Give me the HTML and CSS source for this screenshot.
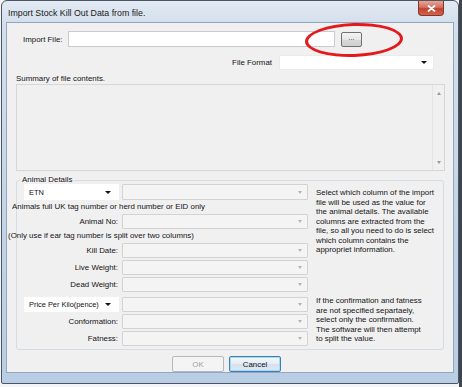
FILE: index.html
```html
<!DOCTYPE html>
<html>
<head>
<meta charset="utf-8">
<link rel="stylesheet" href="styles.css">
</head>
<body>
<div class="window">
  <div class="titlebar">
    <span class="title">Import Stock Kill Out Data from file.</span>
    <div class="close">
      <svg width="9" height="7" viewBox="0 0 9 7"><path d="M1.5 1 L7.5 6 M7.5 1 L1.5 6" stroke="#fff" stroke-width="1.8" stroke-linecap="round"/></svg>
    </div>
  </div>
  <div class="client">
    <div class="row-file">
      <span class="lbl-file">Import File:</span>
      <div class="textbox file-input"></div>
      <button class="btn-browse">...</button>
    </div>
    <div class="row-format">
      <span class="lbl-format">File Format</span>
      <div class="combo combo-white format"><span class="tri"></span></div>
    </div>
    <div class="summary-label">Summary of file contents.</div>
    <div class="summary">
      <div class="summary-body"></div>
      <div class="vscroll"><span class="tri-up"></span><span class="tri-down"></span></div>
    </div>
    <fieldset class="group">
      <legend>Animal Details</legend>
      <div class="grid">
        <div class="combo combo-white sel r1"><span class="sel-text">ETN</span><span class="tri"></span></div>
        <div class="combo combo-dis r1"><span class="tri-dis"></span></div>
        <div class="help help-top">Select which column of the import file will be used as the value for the animal details. The available columns are extracted from the file, so all you need to do is select which column contains the appropriet information.</div>

        <div class="note note-a r2">Animals full UK tag number or herd number or EID only</div>

        <div class="lbl r3">Animal No:</div>
        <div class="combo combo-dis r3"><span class="tri-dis"></span></div>

        <div class="note note-b r4">(Only use if ear tag number is split over two columns)</div>

        <div class="lbl r5">Kill Date:</div>
        <div class="combo combo-dis r5"><span class="tri-dis"></span></div>

        <div class="lbl r6">Live Weight:</div>
        <div class="combo combo-dis r6"><span class="tri-dis"></span></div>

        <div class="lbl r7">Dead Weight:</div>
        <div class="combo combo-dis r7"><span class="tri-dis"></span></div>

        <div class="combo combo-white sel r8"><span class="sel-text">Price Per Kilo(pence)</span><span class="tri"></span></div>
        <div class="combo combo-dis r8"><span class="tri-dis"></span></div>
        <div class="help help-bottom">If the confirmation and fatness are not specified separtaely, select only the confirmation. The software will then attempt to split the value.</div>

        <div class="lbl r9">Conformation:</div>
        <div class="combo combo-dis r9"><span class="tri-dis"></span></div>

        <div class="lbl r10">Fatness:</div>
        <div class="combo combo-dis r10"><span class="tri-dis"></span></div>
      </div>
    </fieldset>
    <div class="buttons">
      <button class="btn btn-ok" disabled>OK</button>
      <button class="btn btn-cancel">Cancel</button>
    </div>
  </div>
  <div class="ellipse"></div>
</div>
</body>
</html>
```

FILE: styles.css
```css
* { box-sizing: border-box; }
html, body { margin: 0; padding: 0; }
body {
  width: 462px;
  height: 387px;
  overflow: hidden;
  background: linear-gradient(to right, #f3f5f7 459px, #3f454c 459px);
  font-family: "Liberation Sans", Arial, sans-serif;
  font-size: 7.9px;
  color: #141414;
}
.window {
  position: relative;
  margin-left: 1px;
  width: 458px;
  height: 384px;
  border: 1px solid #4b5563;
  border-radius: 6px 6px 2px 2px;
  background: linear-gradient(to bottom, #e2eaf3 0, #d3dfec 22px, #c3d4e8 60%, #b9cde5 100%);
  display: flex;
  flex-direction: column;
}
.titlebar {
  height: 21px;
  display: flex;
  align-items: center;
  padding-left: 6px;
  flex: none;
}
.title {
  font-size: 8.8px;
  color: #1a1a1a;
  margin-top: 2px;
}
.close {
  margin-left: auto;
  margin-right: 14px;
  align-self: flex-start;
  width: 26px;
  height: 15px;
  border: 1px solid #8a3428;
  border-top: none;
  border-radius: 0 0 4px 4px;
  background: linear-gradient(to bottom, #e6a596 0%, #d4705f 45%, #c4402e 55%, #d0654f 100%);
  display: flex;
  align-items: center;
  justify-content: center;
}
.client {
  margin: 0 4px;
  height: 351px;
  border: 1px solid #93a6bd;
  background: #f0f0f0;
  padding: 8px 8px 0 9px;
  flex: none;
}
.row-file {
  height: 16px;
  display: flex;
  align-items: center;
}
.lbl-file {
  margin-left: 7px;
  width: 45px;
}
.textbox {
  background: #fff;
  border: 1px solid #c8ccd1;
}
.file-input {
  width: 267px;
  height: 16px;
}
.btn-browse {
  margin: 0 0 0 6px;
  padding: 0 0 3px;
  width: 21px;
  height: 15px;
  border: 1px solid #707070;
  border-radius: 2px;
  background: linear-gradient(to bottom, #f4f4f4, #e6e6e6 50%, #d8d8d8 51%, #d0d0d0);
  font-family: "Liberation Sans", Arial, sans-serif;
  font-size: 7px;
  color: #222;
  line-height: 10px;
}
.row-format {
  margin-top: 8px;
  height: 15px;
  display: flex;
  justify-content: flex-end;
  align-items: center;
  padding-right: 11px;
}
.lbl-format { margin-right: 7px; }
.combo {
  height: 15px;
  display: flex;
  align-items: center;
  justify-content: flex-end;
  padding-right: 6px;
}
.combo-white {
  background: #fff;
  border: 1px solid #ebebeb;
}
.format { width: 155px; }
.tri {
  width: 0;
  height: 0;
  border-left: 3px solid transparent;
  border-right: 3px solid transparent;
  border-top: 3px solid #111;
}
.combo-dis {
  background: #f4f4f4;
  border: 1px solid #d3d3d3;
  border-radius: 1px;
  padding-right: 5px;
}
.tri-dis {
  width: 0;
  height: 0;
  border-left: 2.5px solid transparent;
  border-right: 2.5px solid transparent;
  border-top: 3px solid #b4b4b4;
}
.summary-label {
  margin-top: 4px;
  line-height: 10px;
  height: 10px;
}
.summary {
  height: 87px;
  border: 1px solid #d6d6d6;
  display: flex;
}
.summary-body { flex: 1; }
.vscroll {
  width: 12px;
  border-left: 1px solid #e4e4e4;
  display: flex;
  flex-direction: column;
  justify-content: space-between;
  align-items: center;
  padding: 7px 0 6px;
}
.tri-up {
  width: 0; height: 0;
  border-left: 2.5px solid transparent;
  border-right: 2.5px solid transparent;
  border-bottom: 3px solid #9a9a9a;
}
.tri-down {
  width: 0; height: 0;
  border-left: 2.5px solid transparent;
  border-right: 2.5px solid transparent;
  border-top: 3px solid #9a9a9a;
}
.group {
  margin: 5px 1px 0 0;
  min-width: 0;
  border: 1px solid #d5dce3;
  border-radius: 3px;
  padding: 0 0 2px 7px;
}
.group legend {
  padding: 0 2px;
  margin-left: -4px;
  line-height: 8px;
  font-size: 7.9px;
}
.grid {
  display: grid;
  grid-template-columns: 95px 186px 125px;
  grid-template-rows: 16px 13px 16px 13px 17px 17px 17px 20px 17px 17px;
  column-gap: 3px;
}
.grid > .combo { align-self: center; }
.sel { justify-content: space-between; padding-left: 4px; padding-right: 7px; border-color: #fff; }
.sel-text { color: #111; font-size: 7.4px; }
.r1 { grid-row: 1; height: 16px; }
.r2 { grid-row: 2; }
.r3 { grid-row: 3; }
.r4 { grid-row: 4; }
.r5 { grid-row: 5; }
.r6 { grid-row: 6; }
.r7 { grid-row: 7; }
.r8 { grid-row: 8; }
.grid > .combo.r8 { align-self: end; margin-bottom: 1px; }
.r9 { grid-row: 9; }
.r10 { grid-row: 10; }
.lbl {
  grid-column: 1;
  text-align: right;
  align-self: center;
  padding-right: 1px;
}
.note {
  grid-column: 1 / 3;
  align-self: center;
  white-space: nowrap;
}
.note-a { margin-left: -12px; }
.note-b { margin-left: -16px; }
.help {
  grid-column: 3;
  padding-left: 5px;
  line-height: 9.5px;
  align-self: start;
}
.help-top { grid-row: 1 / 8; padding-top: 4px; }
.help-bottom { grid-row: 8 / 11; padding-top: 3px; padding-right: 12px; }
.buttons {
  margin-top: 6px;
  display: flex;
  justify-content: center;
  gap: 5px;
  padding-right: 8px;
}
.btn {
  width: 52px;
  height: 16px;
  padding: 0;
  border-radius: 2px;
  font-family: "Liberation Sans", Arial, sans-serif;
  font-size: 7.9px;
}
.btn-ok {
  border: 1px solid #b5b9bd;
  background: #f4f4f4;
  color: #a2a2a2;
}
.btn-cancel {
  border: 1px solid #3c7fb1;
  background: linear-gradient(to bottom, #f4f8fb, #e4edf5 50%, #d4e2ee 51%, #dce8f2);
  color: #111;
  box-shadow: inset 0 0 0 1px #a8d8f2;
}
.ellipse {
  position: absolute;
  left: 303px;
  top: 22px;
  width: 98px;
  height: 34px;
  border: 3px solid #e3191c;
  border-radius: 50%;
  transform: rotate(-2deg);
}
```
